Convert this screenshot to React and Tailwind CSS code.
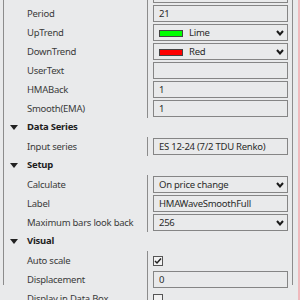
import React from 'react';

// Property grid (indicator settings) — read-only mock.

function Chevron() {
  return (
    <svg width="8" height="6" viewBox="0 0 8 6" className="shrink-0">
      <path d="M1 1 L4 4.5 L7 1" fill="none" stroke="#1a1a1a" strokeWidth="2" />
    </svg>
  );
}

function Box({ children, dropdown }) {
  return (
    <div className="flex items-center h-[17px] ml-[5px] mr-[4px] flex-1 border border-[#858585] bg-[#e9eaeb] pl-[5px] pr-[3px] gap-[6px]">
      <div className="flex-1 flex items-center gap-[6px] truncate pt-[1px]">{children}</div>
      {dropdown && <Chevron />}
    </div>
  );
}

function Swatch({ color }) {
  return <span className={`w-[24px] h-[7px] border border-[#444] ${color}`} />;
}

function Check({ on }) {
  return (
    <div className="ml-[5px] w-[10px] h-[10px] border border-[#555] bg-[#f2f2f2] flex items-center justify-center">
      {on && (
        <svg width="8" height="8" viewBox="0 0 8 8">
          <path d="M1 4 L3 6 L7 1.5" fill="none" stroke="#222" strokeWidth="1.5" />
        </svg>
      )}
    </div>
  );
}

function Row({ label, children }) {
  return (
    <div className="flex h-[19px] items-center">
      <div className="w-[144px] h-full flex items-center pl-[23px] pt-[1px] border-r border-[#8c8c8c] text-[#3a3a3a] whitespace-nowrap overflow-hidden">
        {label}
      </div>
      <div className="flex-1 flex items-center">{children}</div>
    </div>
  );
}

function Category({ label }) {
  return (
    <div className="flex h-[19px] items-center font-bold text-[#1e1e1e]">
      <svg width="8" height="6" viewBox="0 0 8 6" className="ml-[6px] mr-[9px]">
        <path d="M0 0 H8 L4 5 Z" fill="#222" />
      </svg>
      {label}
    </div>
  );
}

export default function App() {
  return (
    <div className="w-[300px] h-[300px] overflow-hidden bg-[#e9eaeb] flex font-['Noto_Sans',sans-serif] text-[9.5px] tracking-[-0.25px] text-[#2a2a2a]">
      <div className="w-[3px]" />
      <div className="w-[290px] h-full border-l border-r border-[#8c8c8c] -mt-[15px]">
        <Row label=""><Box /></Row>
        <Row label="Period"><Box>21</Box></Row>
        <Row label="UpTrend"><Box dropdown><Swatch color="bg-[#00ff00]" />Lime</Box></Row>
        <Row label="DownTrend"><Box dropdown><Swatch color="bg-[#ff0000]" />Red</Box></Row>
        <Row label="UserText"><Box /></Row>
        <Row label="HMABack"><Box>1</Box></Row>
        <Row label="Smooth(EMA)"><Box>1</Box></Row>
        <Category label="Data Series" />
        <Row label="Input series"><Box>ES 12-24 (7/2 TDU Renko)</Box></Row>
        <Category label="Setup" />
        <Row label="Calculate"><Box dropdown>On price change</Box></Row>
        <Row label="Label"><Box>HMAWaveSmoothFull</Box></Row>
        <Row label="Maximum bars look back"><Box dropdown>256</Box></Row>
        <Category label="Visual" />
        <Row label="Auto scale"><Check on /></Row>
        <Row label="Displacement"><Box>0</Box></Row>
        <Row label="Display in Data Box"><Check /></Row>
        <Row label="Panel"><Box>1</Box></Row>
      </div>
      <div className="w-[5px]" />
      <div className="w-[2px] h-full bg-[#f0b8bc]" />
    </div>
  );
}
